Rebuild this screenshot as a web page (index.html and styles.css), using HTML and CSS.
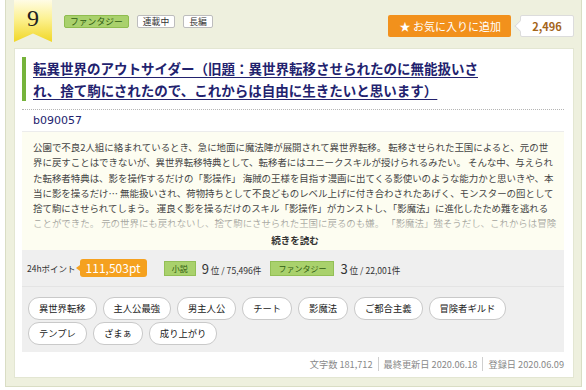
FILE: index.html
```html
<!DOCTYPE html>
<html lang="ja">
<head>
    <meta charset="UTF-8">
    <title>ランキング</title>
    <link rel="stylesheet" href="styles.css">
</head>
<body>
<div class="item">
    <div class="item-head">
        <div class="rank">9</div>
        <div class="labels">
            <span class="label genre">ファンタジー</span>
            <span class="label">連載中</span>
            <span class="label">長編</span>
        </div>
        <div class="fav">
            <button class="fav-btn">&#9733; お気に入りに追加</button>
            <span class="fav-count">2,496</span>
        </div>
    </div>
    <div class="panel">
        <h2 class="title"><a href="#">転異世界のアウトサイダー（旧題：異世界転移させられたのに無能扱いされ、捨て駒にされたので、これからは自由に生きたいと思います）</a></h2>
        <div class="author">b090057</div>
        <div class="synopsis">
            <p class="synopsis-text">公園で不良2人組に絡まれているとき、急に地面に魔法陣が展開されて異世界転移。 転移させられた王国によると、元の世界に戻すことはできないが、異世界転移特典として、転移者にはユニークスキルが授けられるみたい。 そんな中、与えられた転移者特典は、影を操作するだけの「影操作」 海賊の王様を目指す漫画に出てくる影使いのような能力かと思いきや、本当に影を操るだけ… 無能扱いされ、荷物持ちとして不良どものレベル上げに付き合わされたあげく、モンスターの囮として捨て駒にさせられてしまう。 運良く影を操るだけのスキル「影操作」がカンストし、「影魔法」に進化したため難を逃れることができた。 元の世界にも戻れないし、捨て駒にさせられた王国に戻るのも嫌。 「影魔法」強そうだし、これからは冒険者として自由に生きていこう。</p>
            <div class="more">続きを読む</div>
        </div>
        <div class="stats">
            <div class="points">
                <span class="pt-label">24hポイント</span>
                <span class="pt-value">111,503pt</span>
                <span class="cat">小説</span>
                <span class="pos"><b>9</b> 位 / 75,496件</span>
                <span class="cat">ファンタジー</span>
                <span class="pos"><b>3</b> 位 / 22,001件</span>
            </div>
            <ul class="tags">
                <li>異世界転移</li>
                <li>主人公最強</li>
                <li>男主人公</li>
                <li>チート</li>
                <li>影魔法</li>
                <li>ご都合主義</li>
                <li>冒険者ギルド</li>
                <li>テンプレ</li>
                <li>ざまぁ</li>
                <li>成り上がり</li>
            </ul>
        </div>
        <div class="info">
            <span>文字数 181,712</span>
            <span>最終更新日 2020.06.18</span>
            <span>登録日 2020.06.09</span>
        </div>
    </div>
</div>
</body>
</html>
```

FILE: styles.css
```css
body {
    margin: 0;
    padding: 0;
    background: #fff;
    font-family: "Noto Sans CJK JP", sans-serif;
    color: #333;
}
.item {
    margin: 0 4px 3px 5px;
    background: #eef0de;
    border: 1px solid #d9ddc4;
    border-top: none;
    padding: 0 7px 8px 8px;
}
.item-head {
    display: flex;
    align-items: flex-start;
    height: 48px;
}
.rank {
    width: 38px;
    height: 42px;
    box-sizing: border-box;
    padding-top: 5px;
    text-align: center;
    font-family: "Liberation Serif", serif;
    font-size: 24px;
    line-height: 26px;
    color: #222;
    background: linear-gradient(#fffce6 0%, #fcf191 45%, #f1d726 100%);
    clip-path: polygon(0 0, 100% 0, 100% 100%, 50% 80%, 0 100%);
}
.labels {
    display: flex;
    gap: 8px;
    margin: 15px 0 0 12px;
}
.label {
    font-size: 8.8px;
    line-height: 11px;
    padding: 0 5px;
    border: 1px solid #bdbdbd;
    border-radius: 2px;
    background: #fff;
    color: #333;
}
.label.genre {
    background: #a9d16c;
    border-color: #8fbd4f;
    color: #2f5b10;
}
.fav {
    margin: 15px 0 0 auto;
    display: flex;
    align-items: center;
}
.fav-btn {
    font-family: inherit;
    font-size: 11px;
    line-height: 22px;
    height: 22px;
    padding: 0 10px 0 12px;
    background: #f2911c;
    color: #fff;
    border: none;
    border-radius: 2px;
}
.fav-count {
    position: relative;
    margin-left: 9px;
    width: 52px;
    height: 20px;
    line-height: 20px;
    text-align: center;
    font-size: 11px;
    font-weight: bold;
    color: #a4651a;
    background: #fff;
    border: 1px solid #dcdcdc;
    border-radius: 2px;
}
.fav-count::before {
    content: "";
    position: absolute;
    left: -5px;
    top: 6px;
    width: 7px;
    height: 7px;
    background: #fff;
    border-left: 1px solid #dcdcdc;
    border-bottom: 1px solid #dcdcdc;
    transform: rotate(45deg);
}
.panel {
    background: #fff;
    border: 1px solid #e3e6d2;
    padding: 8px 9px 6px 7px;
}
.title {
    margin: 0;
    padding: 0 80px 0 7px;
    border-left: 4px solid #76b33b;
    font-size: 13.5px;
    line-height: 22px;
    font-weight: bold;
}
.title a {
    color: #22226e;
    text-decoration: underline;
    text-underline-offset: 3px;
}
.author {
    margin-top: 8px;
    border-top: 1px dotted #b5b5b5;
    border-bottom: 1px solid #ececec;
    padding-left: 11px;
    height: 21px;
    font-family: "DejaVu Sans", sans-serif;
    font-size: 11px;
    line-height: 21px;
    color: #22226e;
}
.synopsis {
    background: #fdfdf1;
    padding: 8px 7px 2px 11px;
}
.synopsis-text {
    position: relative;
    margin: 0;
    height: 92px;
    overflow: hidden;
    font-size: 9.45px;
    line-height: 15.3px;
    color: #444;
}
.synopsis-text::after {
    content: "";
    position: absolute;
    left: 0;
    right: 0;
    bottom: 0;
    height: 15px;
    background: linear-gradient(rgba(253, 253, 241, 0.4), rgba(253, 253, 241, 0.8));
}
.more {
    text-align: center;
    font-size: 9.5px;
    font-weight: bold;
    line-height: 16px;
    color: #333;
}
.stats {
    background: #efefef;
}
.points {
    display: flex;
    align-items: center;
    height: 36px;
    padding-left: 5px;
    border-bottom: 1px solid #e4e4e4;
    font-size: 8.5px;
    color: #333;
}
.pt-value {
    position: relative;
    margin-left: 4px;
    margin-right: 17px;
    background: #f5a11f;
    color: #fff;
    font-size: 12px;
    line-height: 18px;
    padding: 0 6px;
    border-radius: 3px;
}
.pt-value::before {
    content: "";
    position: absolute;
    left: -4px;
    top: 6px;
    border: 3px solid transparent;
    border-right: 4px solid #f5a11f;
    border-left: none;
}
.cat {
    background: #a9d16c;
    border: 1px solid #93bf56;
    color: #2f5b10;
    font-size: 8px;
    line-height: 13px;
    padding: 0 7px;
    margin-right: 6px;
}
.pos {
    margin-right: 9px;
    font-size: 8.6px;
}
.pos b {
    font-weight: normal;
    font-size: 13px;
}
.tags {
    list-style: none;
    margin: 0;
    padding: 10px 0 7px 6px;
    display: flex;
    flex-wrap: wrap;
    gap: 2px 6px;
}
.tags li {
    background: #fff;
    border: 1px solid #c9c9c9;
    border-radius: 11px;
    padding: 0 10px;
    height: 21px;
    line-height: 21px;
    font-size: 9.3px;
    color: #222;
}
.info {
    display: flex;
    justify-content: flex-end;
    padding-top: 5px;
    font-size: 9.2px;
    line-height: 14px;
    color: #888;
}
.info span {
    padding: 0 5px;
    border-left: 1px solid #cfcfcf;
}
.info span:first-child {
    border-left: none;
}
.info span:last-child {
    padding-right: 0;
}
```
